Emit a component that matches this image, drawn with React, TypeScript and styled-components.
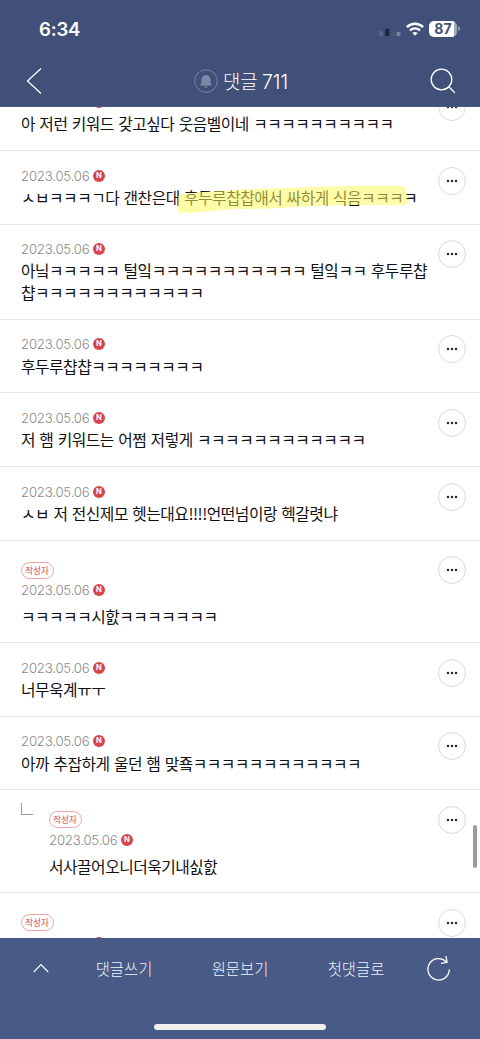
import React from "react";
import styled, { createGlobalStyle } from "styled-components";

const Global = createGlobalStyle`
  * { box-sizing: border-box; }
  body { margin: 0; background: #fff; }
`;

const Screen = styled.div`
  width: 480px;
  height: 1039px;
  display: flex;
  flex-direction: column;
  overflow: hidden;
  position: relative;
  background: #fff;
  font-family: Inter, "Noto Sans CJK KR", sans-serif;
`;

const Header = styled.header`
  flex: none;
  height: 107px;
  background: #405078;
  color: #fff;
  border-bottom: 1px solid #4a5a83;
`;

const StatusBar = styled.div`
  height: 57px;
  display: flex;
  align-items: center;
  justify-content: space-between;
  padding: 0 20px 0 39px;
`;

const Clock = styled.span`
  font-size: 18.6px;
  font-weight: 600;
  line-height: 24px;
  letter-spacing: -0.2px;
`;

const StatusIcons = styled.div`
  display: flex;
  align-items: center;
`;

const Battery = styled.div`
  width: 28px;
  height: 16px;
  margin-left: 5px;
  border-radius: 5px;
  background: linear-gradient(90deg, #fff 25px, #a3abbe 25px);
  color: #405078;
  font-size: 14px;
  font-weight: 700;
  line-height: 16px;
  text-align: center;
`;

const BatteryTip = styled.span`
  width: 2px;
  height: 5px;
  margin-left: 1px;
  border-radius: 0 2px 2px 0;
  background: #8d97ae;
`;

const NavBar = styled.div`
  height: 48px;
  display: grid;
  grid-template-columns: 60px 1fr 60px;
  align-items: center;
  justify-items: center;
  padding: 0 7px 0 4px;
`;

const IconButton = styled.button`
  display: flex;
  padding: 0;
  border: 0;
  background: none;
  color: #fff;
`;

const Title = styled.h1`
  display: flex;
  align-items: center;
  gap: 5px;
  margin: 0;
  padding-left: 5px;
  font-family: "Noto Sans CJK KR", sans-serif;
  font-size: 18.9px;
  font-weight: 300;
  line-height: 26px;
  white-space: nowrap;
`;

const Count = styled.span`
  font-family: Inter, sans-serif;
  font-size: 19.4px;
`;

const List = styled.main`
  flex: 1;
  min-height: 0;
  overflow: hidden;
`;

const Row = styled.article<{ $height: number; $first?: boolean }>`
  height: ${(p) => p.$height}px;
  margin-top: ${(p) => (p.$first ? -30 : 0)}px;
  display: flex;
  align-items: flex-start;
  padding: 15.6px 14px 0 21px;
  border-bottom: 1px solid #e5e5e6;
`;

const ReplyMark = styled.span`
  flex: none;
  width: 12px;
  height: 12px;
  margin: -3px 16px 0 0;
  border-left: 1px solid #999;
  border-bottom: 1px solid #999;
`;

const Content = styled.div`
  flex: 1;
  min-width: 0;
`;

const AuthorTag = styled.div`
  width: 33px;
  height: 17px;
  margin: 5.4px 0 2.6px -0.5px;
  border: 1px solid #efa4a6;
  border-radius: 9px;
  color: #dc4a50;
  font-family: "Noto Sans CJK KR", sans-serif;
  font-size: 8.6px;
  font-weight: 400;
  line-height: 15px;
  text-align: center;
`;

const Meta = styled.div`
  display: flex;
  align-items: center;
  height: 18px;
  gap: 4px;
`;

const DateText = styled.time`
  width: 68px;
  color: #8a8a8a;
  font-size: 13.2px;
  font-weight: 300;
  letter-spacing: -0.2px;
  white-space: nowrap;
`;

const NewBadge = styled.span`
  width: 12px;
  height: 12px;
  border-radius: 50%;
  background: #d8454b;
  color: #fff;
  font-size: 7.6px;
  font-weight: 700;
  line-height: 12.6px;
  text-align: center;
`;

const Body = styled.p<{ $gap: number }>`
  margin: ${(p) => p.$gap}px 0 0;
  color: #111;
  font-family: "Noto Sans CJK KR", sans-serif;
  font-size: 15.8px;
  font-weight: 400;
  line-height: 21.6px;
  letter-spacing: -0.5px;
  word-spacing: 1.3px;
  white-space: nowrap;
`;

const Highlight = styled.span`
  position: relative;
`;

const Marker = styled.svg`
  position: absolute;
  left: -7px;
  top: -0.5px;
  width: 232px;
  height: 30px;
`;

const MoreButton = styled.button`
  flex: none;
  width: 28px;
  height: 28px;
  display: flex;
  align-items: center;
  justify-content: center;
  padding: 0;
  border: 1px solid #d9d9dc;
  border-radius: 50%;
  background: #fff;
`;

const ScrollThumb = styled.div`
  position: absolute;
  right: 3px;
  top: 825px;
  width: 4px;
  height: 43px;
  border-radius: 2px;
  background: #9c9c9e;
`;

const Footer = styled.footer`
  flex: none;
  height: 101px;
  display: flex;
  flex-direction: column;
  align-items: center;
  background: #485a86;
  color: #fff;
`;

const Toolbar = styled.nav`
  width: 100%;
  height: 60px;
  display: grid;
  grid-template-columns: 50px 116px 116px 116px 50px;
  align-items: center;
  justify-items: center;
  padding: 0 16px;
`;

const ToolButton = styled.button`
  padding: 0;
  border: 0;
  background: none;
  color: #f2f4f9;
  font-family: "Noto Sans CJK KR", sans-serif;
  font-size: 15.4px;
  font-weight: 300;
  line-height: 24px;
`;

const HomeIndicator = styled.div`
  width: 172px;
  height: 6px;
  margin-top: 26px;
  border-radius: 3px;
  background: #f1f0f0;
`;

type Comment = { text: React.ReactNode; author?: boolean; reply?: boolean; height: number };

const comments: Comment[] = [
  { text: "아 저런 키워드 갖고싶다 웃음벨이네 ㅋㅋㅋㅋㅋㅋㅋㅋㅋㅋ", height: 74 },
  {
    text: (
      <>
        ㅅㅂㅋㅋㅋㄱ다 갠찬은대{" "}
        <Highlight>
          후두루찹찹애서 싸하게 식음ㅋㅋㅋㅋ
          <Marker viewBox="0 0 232 30" aria-hidden>
            <path
              d="M1 13Q1 9 5 9C50 4 110 3 170 1L225 1Q228 1 229 5L231 17Q231 20 227 20L175 20C130 20 110 24 60 24C40 25 25 28 5 28Q1 28 1 25Z"
              fill="#fff95c"
              fillOpacity=".53"
            />
          </Marker>
        </Highlight>
      </>
    ),
    height: 73.5,
  },
  {
    text: (
      <>
        아닠ㅋㅋㅋㅋㅋ 털잌ㅋㅋㅋㅋㅋㅋㅋㅋㅋㅋㅋ 털잌ㅋㅋ 후두루챱
        <br />
        챱ㅋㅋㅋㅋㅋㅋㅋㅋㅋㅋㅋㅋ
      </>
    ),
    height: 95.3,
  },
  { text: "후두루챱챱ㅋㅋㅋㅋㅋㅋㅋㅋ", height: 73.6 },
  { text: "저 햄 키워드는 어쩜 저렇게 ㅋㅋㅋㅋㅋㅋㅋㅋㅋㅋㅋㅋ", height: 73.6 },
  { text: "ㅅㅂ 저 전신제모 헷는대요!!!!언떤넘이랑 헥갈렷냐", height: 73.7 },
  { text: "ㅋㅋㅋㅋㅋ시핤ㅋㅋㅋㅋㅋㅋㅋ", author: true, height: 102.5 },
  { text: "너무욱계ㅠㅜ", height: 73.7 },
  { text: "아까 추잡하게 울던 햄 맞죸ㅋㅋㅋㅋㅋㅋㅋㅋㅋㅋㅋㅋ", height: 73.6 },
  { text: "서사끌어오니더욱기내싨핤", author: true, reply: true, height: 102.5 },
  { text: "", author: true, height: 102.5 },
];

export default function App() {
  return (
    <Screen>
      <Global />
      <Header>
        <StatusBar>
          <Clock>6:34</Clock>
          <StatusIcons>
            <svg width="22" height="16" viewBox="0 0 22 16">
              <rect x="0" y="10" width="4" height="5" rx="1.2" fill="#59678a" />
              <rect x="6" y="7.5" width="4.4" height="7.5" rx="1.2" fill="#1d2740" />
              <rect x="12" y="10" width="4" height="5" rx="1.2" fill="#4a587c" />
              <rect x="17.5" y="11" width="4" height="4" rx="1.2" fill="#7582a3" />
            </svg>
            <svg width="18" height="14" viewBox="0 0 18 14" style={{ marginLeft: 5 }} fill="none" stroke="#fff" strokeWidth="2.4">
              <path d="M.9 5.1C5.6.6 12.4.6 17.1 5.1" />
              <path d="M4 8.4c3-2.7 7-2.7 10 0" />
              <path d="M9 13.7 6.4 11c1.5-1.3 3.7-1.3 5.2 0Z" fill="#fff" stroke="none" />
            </svg>
            <Battery>87</Battery>
            <BatteryTip />
          </StatusIcons>
        </StatusBar>
        <NavBar>
          <IconButton aria-label="back">
            <svg width="16" height="28" viewBox="0 0 16 28" fill="none" stroke="#fff" strokeWidth="1.3">
              <path d="M15 1.5 1.5 14 15 26.5" />
            </svg>
          </IconButton>
          <Title>
            <svg width="24" height="24" viewBox="0 0 24 24">
              <circle cx="12" cy="12" r="11.3" fill="none" stroke="#7683a3" strokeWidth="1" />
              <path d="M11.2 6.2a.8.8 0 0 1 1.6 0c2.5.4 3.8 2.2 3.8 4.7v3.2l1.2 1.8v.7H6.2v-.7l1.2-1.8v-3.2c0-2.5 1.3-4.3 3.8-4.7Z" fill="#7c89a8" />
              <path d="M10.2 17.4h3.6a1.8 1.4 0 0 1-3.6 0Z" fill="#7c89a8" />
            </svg>
            <span>
              댓글 <Count>711</Count>
            </span>
          </Title>
          <IconButton aria-label="search">
            <svg width="26" height="26" viewBox="0 0 26 26" fill="none" stroke="#fff" strokeWidth="1.3">
              <circle cx="11.5" cy="11.5" r="10.3" />
              <path d="m18.8 18.8 6 6" />
            </svg>
          </IconButton>
        </NavBar>
      </Header>
      <List>
        {comments.map((c, i) => (
          <Row key={i} $height={c.height} $first={i === 0}>
            {c.reply && <ReplyMark />}
            <Content>
              {c.author && <AuthorTag>작성자</AuthorTag>}
              <Meta>
                <DateText>2023.05.06</DateText>
                <NewBadge>N</NewBadge>
              </Meta>
              <Body $gap={c.author ? 6.6 : 2.4}>{c.text}</Body>
            </Content>
            <MoreButton aria-label="more">
              <svg width="12" height="4" viewBox="0 0 12 4" fill="#2a2a2a">
                <circle cx="2" cy="2" r="1.25" />
                <circle cx="6" cy="2" r="1.25" />
                <circle cx="10" cy="2" r="1.25" />
              </svg>
            </MoreButton>
          </Row>
        ))}
      </List>
      <ScrollThumb />
      <Footer>
        <Toolbar>
          <IconButton aria-label="up">
            <svg width="16" height="10" viewBox="0 0 16 10" fill="none" stroke="#fff" strokeWidth="1.1">
              <path d="M.8 9 8 1.5 15.2 9" />
            </svg>
          </IconButton>
          <ToolButton>댓글쓰기</ToolButton>
          <ToolButton>원문보기</ToolButton>
          <ToolButton>첫댓글로</ToolButton>
          <IconButton aria-label="refresh">
            <svg width="24" height="26" viewBox="0 0 24 26" fill="none" stroke="#fff" strokeWidth="1.3">
              <path d="M22.3 14.500A10.700 10.700 0 1 1 19.200 6.800" />
              <path d="M18.900 1l1.200 6.300-6.100 1" />
            </svg>
          </IconButton>
        </Toolbar>
        <HomeIndicator />
      </Footer>
    </Screen>
  );
}
